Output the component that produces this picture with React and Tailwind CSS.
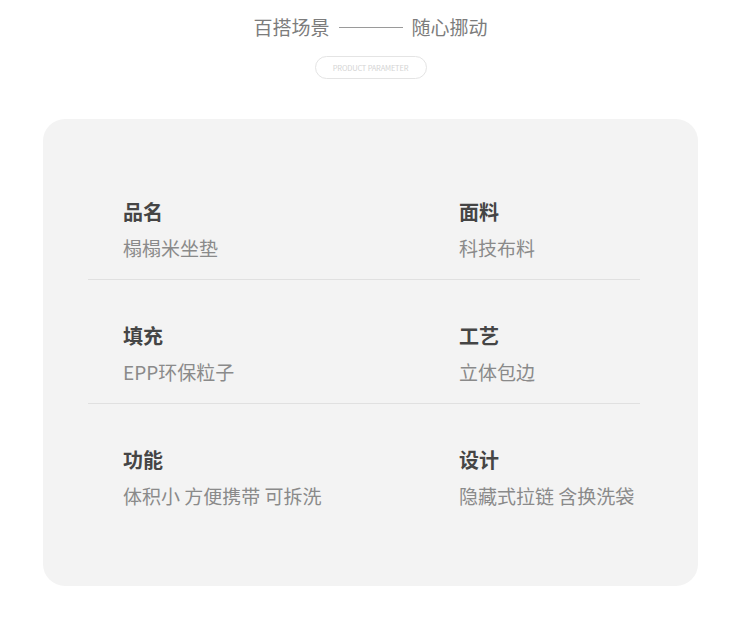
const specs = [
  [
    { label: '品名', value: '榻榻米坐垫' },
    { label: '面料', value: '科技布料' },
  ],
  [
    { label: '填充', value: 'EPP环保粒子' },
    { label: '工艺', value: '立体包边' },
  ],
  [
    { label: '功能', value: '体积小 方便携带 可拆洗' },
    { label: '设计', value: '隐藏式拉链 含换洗袋' },
  ],
]

function Spec({ label, value }) {
  return (
    <div>
      <div className="text-[20px] leading-[26px] font-bold text-[#454545]">{label}</div>
      <div className="mt-[10px] text-[19px] leading-[26px] text-[#8a8a8a]">{value}</div>
    </div>
  )
}

export default function App() {
  return (
    <div
      className="w-[750px] h-[633px] bg-white overflow-hidden"
      style={{ fontFamily: '"Noto Sans CJK SC", "Noto Sans", sans-serif' }}
    >
      <div className="w-[741px]">
        {/* Title */}
        <div className="pt-[14px] flex items-center justify-center gap-[9px] text-[19px] leading-[26px] text-[#7c7c7c]">
          <span>百搭场景</span>
          <span className="w-[64px] h-px bg-[#9a9a9a]"></span>
          <span>随心挪动</span>
        </div>
        <div className="mt-[16px] flex justify-center">
          <div className="h-[23px] w-[112px] rounded-full border border-[#e4e4e4] flex items-center justify-center text-[7.5px] tracking-[-0.2px] text-[#d4d4d4]">
            PRODUCT PARAMETER
          </div>
        </div>

        {/* Parameter card */}
        <div className="mt-[40px] ml-[43px] w-[655px] h-[467px] rounded-[22px] bg-[#f3f3f3] pt-[80px]">
          {specs.map((row, i) => (
            <div key={i}>
              <div className={`grid grid-cols-[336px_1fr] pl-[80px] ${i > 0 ? 'pt-[43px]' : ''}`}>
                {row.map((item) => (
                  <Spec key={item.label} {...item} />
                ))}
              </div>
              {i < specs.length - 1 && (
                <div className="mt-[18px] ml-[45px] mr-[58px] h-px bg-[#e0e0e0]"></div>
              )}
            </div>
          ))}
        </div>
      </div>
    </div>
  )
}
